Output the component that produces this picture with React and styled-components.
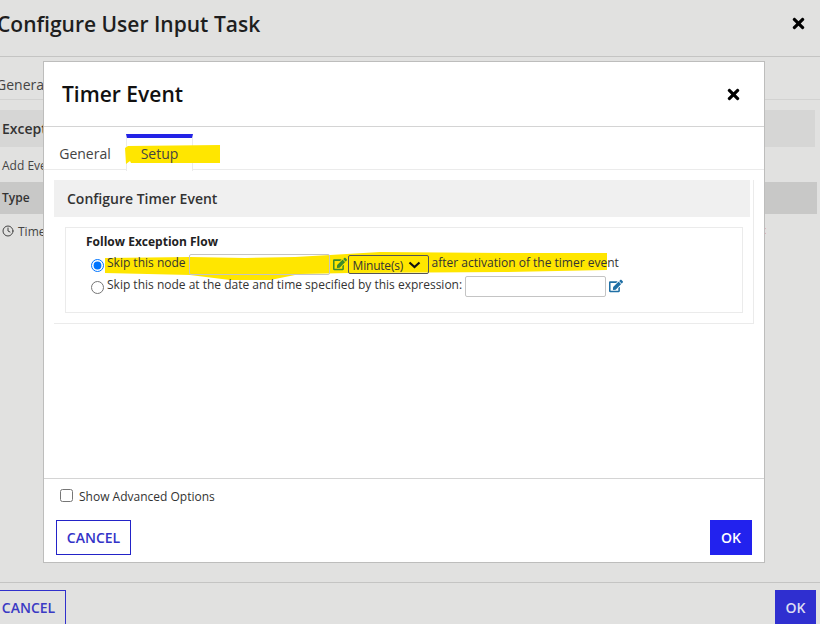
import React from 'react'
import styled, { createGlobalStyle } from 'styled-components'
import { FaEdit, FaTimes } from 'react-icons/fa'
import { FiClock } from 'react-icons/fi'

const Global = createGlobalStyle`
  html, body { margin: 0; padding: 0; }
  body { font-family: "Open Sans", "Liberation Sans", sans-serif; color: #222; }
  * { box-sizing: border-box; }
`

const App = () => {
  return (
    <Page>
      <Global />
      <BackHeader>
        <BackTitle>Configure User Input Task</BackTitle>
        <CloseBack><FaTimes /></CloseBack>
      </BackHeader>
      <BackTabs>General</BackTabs>
      <BackBand>Exception</BackBand>
      <BackLink>Add Event</BackLink>
      <BackColumns>Type</BackColumns>
      <BackRow>
        <BackCell><FiClock /> Timer</BackCell>
        <RemoveBack><FaTimes /></RemoveBack>
      </BackRow>
      <BackFooter>
        <OutlineButton $back>CANCEL</OutlineButton>
        <SolidButton $back>OK</SolidButton>
      </BackFooter>

      <Modal>
        <ModalHeader>
          <ModalTitle>Timer Event</ModalTitle>
          <CloseModal><FaTimes /></CloseModal>
        </ModalHeader>
        <Tabs>
          <Tab>General</Tab>
          <Tab $active>
            <SetupMark viewBox="0 0 95 19" preserveAspectRatio="none">
              <path d="M0 3 L3 1 L95 0 L95 18 L6 18 L5 16 L1 19 Z" />
            </SetupMark>
            <TabLabel>Setup</TabLabel>
          </Tab>
        </Tabs>
        <ModalBody>
          <Section>
            <SectionHead>Configure Timer Event</SectionHead>
            <FlowBox>
              <FlowTitle>Follow Exception Flow</FlowTitle>
              <OptionRow>
                <RowMark viewBox="0 0 503 29" preserveAspectRatio="none">
                  <path d="M0 6 L85 5 L140 6 L190 5 L225 3 L275 0 L400 1 L502 1 L502 18 L400 20 L245 21 L195 22 L165 28 L125 28 L85 23 L0 21 Z" />
                </RowMark>
                <Radio defaultChecked name="flow" />
                <OptionText>Skip this node</OptionText>
                <TextField $first />
                <EditIcon $first><FaEdit /></EditIcon>
                <UnitSelect>
                  Minute(s)
                  <svg width="13" height="8" viewBox="0 0 13 8">
                    <path d="M1.5 1.5 L6.5 6 L11.5 1.5" fill="none" stroke="#111" strokeWidth="2.2" />
                  </svg>
                </UnitSelect>
                <OptionText $after>after activation of the timer event</OptionText>
              </OptionRow>
              <OptionRow>
                <Radio name="flow" />
                <OptionText>Skip this node at the date and time specified by this expression:</OptionText>
                <TextField />
                <EditIcon><FaEdit /></EditIcon>
              </OptionRow>
            </FlowBox>
          </Section>
        </ModalBody>
        <ModalFooter>
          <AdvancedRow>
            <Check />
            <span>Show Advanced Options</span>
          </AdvancedRow>
          <ButtonRow>
            <OutlineButton>CANCEL</OutlineButton>
            <SolidButton>OK</SolidButton>
          </ButtonRow>
        </ModalFooter>
      </Modal>
    </Page>
  )
}

export default App

const Page = styled.div`
  position: relative;
  width: 820px;
  height: 624px;
  overflow: hidden;
  background: #e1e1e0;
  display: flex;
  flex-direction: column;
`
const BackHeader = styled.div`
  height: 57px;
  flex: none;
  display: flex;
  align-items: center;
  justify-content: space-between;
  padding: 0 13px 9px 0;
  border-bottom: 1px solid #c4c4c3;
`
const BackTitle = styled.h1`
  margin: 0 0 0 -3px;
  font-size: 21px;
  font-weight: 600;
  line-height: 30px;
  color: #1e1e1e;
`
const CloseBack = styled.span`
  font-size: 17px;
  color: #000;
  display: flex;
`
const BackTabs = styled.div`
  height: 43px;
  flex: none;
  padding: 18px 0 0 0;
  margin-left: -4px;
  font-size: 14px;
  color: #444;
  border-bottom: 1px solid #d2d2d1;
`
const BackBand = styled.div`
  height: 37px;
  flex: none;
  margin-top: 10px;
  width: 815px;
  background: #d6d6d5;
  padding: 9px 2px;
  font-size: 14px;
  font-weight: 600;
  color: #333;
`
const BackLink = styled.div`
  height: 35px;
  flex: none;
  padding: 10px 2px;
  font-size: 12px;
  color: #444;
`
const BackColumns = styled.div`
  height: 32px;
  flex: none;
  width: 817px;
  background: #c8c8c7;
  padding: 7px 2px;
  font-size: 12px;
  font-weight: 600;
  color: #333;
`
const BackRow = styled.div`
  height: 34px;
  flex: none;
  padding: 9px 53px 9px 2px;
  display: flex;
  align-items: center;
  justify-content: space-between;
  font-size: 12px;
  color: #444;
`
const BackCell = styled.span`
  display: flex;
  align-items: center;
  gap: 4px;
`
const RemoveBack = styled.span`
  display: flex;
  font-size: 10px;
  color: #c8506e;
`
const BackFooter = styled.div`
  margin-top: auto;
  height: 42px;
  flex: none;
  display: flex;
  justify-content: space-between;
  align-items: flex-start;
  padding: 7px 4px 0 0;
  border-top: 1px solid #c4c4c3;
`
const Modal = styled.div`
  position: absolute;
  left: 43px;
  top: 61px;
  width: 722px;
  height: 502px;
  background: #fff;
  border: 1px solid #bdbdbc;
  display: flex;
  flex-direction: column;
`
const ModalHeader = styled.div`
  height: 65px;
  flex: none;
  display: flex;
  align-items: center;
  justify-content: space-between;
  padding: 0 22px 0 18px;
  border-bottom: 1px solid #d4d4d4;
`
const ModalTitle = styled.h2`
  margin: 0;
  font-size: 21px;
  font-weight: 600;
  color: #111;
`
const CloseModal = styled.span`
  font-size: 17px;
  color: #000;
  display: flex;
`
const Tabs = styled.div`
  height: 43px;
  flex: none;
  display: flex;
  padding-left: 2px;
  border-bottom: 1px solid #ebebeb;
`
const Tab = styled.div`
  position: relative;
  width: ${p => (p.$active ? '67px' : '80px')};
  margin-top: 7px;
  height: 36px;
  display: flex;
  justify-content: center;
  align-items: center;
  padding: 2px 2px 0 0;
  font-size: 14px;
  color: #444;
  ${p => p.$active && `
    border-top: 4px solid #2323e6;
    border-left: 1px solid #ebebeb;
    border-right: 1px solid #ebebeb;
    background: #fff;
    height: 37px;
    margin-bottom: -1px;
    padding: 0 0 2px 0;
  `}
`
const TabLabel = styled.span`
  position: relative;
`
const SetupMark = styled.svg`
  position: absolute;
  left: -2px;
  top: 7px;
  width: 95px;
  height: 19px;
  path { fill: #ffe600; }
`
const ModalBody = styled.div`
  flex: 1;
  padding: 10px 10px 0 10px;
`
const Section = styled.div`
  height: 144px;
  border: 1px solid #ebebeb;
  border-width: 0 1px 1px 0;
`
const SectionHead = styled.div`
  height: 37px;
  margin-right: 3px;
  background: #f0f0f0;
  padding: 9px 13px;
  font-size: 14px;
  font-weight: 600;
  color: #333;
`
const FlowBox = styled.div`
  height: 86px;
  margin: 10px 10px 0 11px;
  border: 1px solid #ebebeb;
  padding: 6px 0 0 20px;
`
const FlowTitle = styled.div`
  font-size: 12px;
  font-weight: 700;
  color: #222;
  line-height: 16px;
  margin-bottom: 3px;
`
const OptionRow = styled.div`
  position: relative;
  height: 22px;
  display: flex;
  align-items: center;
  padding-left: 5px;
  font-size: 12px;
  color: #333;
`
const RowMark = styled.svg`
  position: absolute;
  left: 19px;
  top: -1px;
  width: 503px;
  height: 29px;
  path { fill: #ffe600; }
`
const Radio = styled.input.attrs({ type: 'radio' })`
  position: relative;
  width: 13px;
  height: 13px;
  margin: 3px 3px 0 0;
  flex: none;
`
const OptionText = styled.span`
  position: relative;
  white-space: nowrap;
  margin-bottom: 3px;
  margin-left: ${p => (p.$after ? '3px' : '0')};
  margin-right: 3px;
`
const TextField = styled.input.attrs({ type: 'text' })`
  position: relative;
  width: 141px;
  height: 21px;
  background: ${p => (p.$first ? 'transparent' : '#fff')};
  border: 1px solid #c4c4c4;
  border-radius: 2px;
  flex: none;
`
const EditIcon = styled.span`
  position: relative;
  display: flex;
  margin: 0 1px 0 3px;
  font-size: 14px;
  color: ${p => (p.$first ? '#3d8c2c' : '#1f6fa5')};
`
const UnitSelect = styled.div`
  position: relative;
  width: 81px;
  height: 19px;
  flex: none;
  display: flex;
  align-items: center;
  justify-content: space-between;
  padding: 2px 7px 0 4px;
  border: 1px solid #555;
  border-radius: 2px;
  font-size: 12px;
  letter-spacing: -0.2px;
  color: #333;
`
const ModalFooter = styled.div`
  height: 84px;
  flex: none;
  border-top: 1px solid #d4d4d4;
  padding: 9px 12px 7px 12px;
  display: flex;
  flex-direction: column;
  justify-content: space-between;
`
const AdvancedRow = styled.label`
  display: flex;
  align-items: center;
  gap: 6px;
  padding-left: 4px;
  font-size: 12px;
  color: #333;
`
const Check = styled.input.attrs({ type: 'checkbox' })`
  width: 13px;
  height: 13px;
  margin: -3px 0 0 0;
`
const ButtonRow = styled.div`
  display: flex;
  justify-content: space-between;
`
const OutlineButton = styled.button`
  width: ${p => (p.$back ? '66px' : '75px')};
  height: ${p => (p.$back ? '40px' : '35px')};
  padding: ${p => (p.$back ? '0 8px 6px 0' : '0')};
  background: transparent;
  border: 1px solid ${p => (p.$back ? '#3030cc' : '#2323c8')};
  ${p => p.$back && 'border-left: none; border-bottom: none;'}
  font-family: inherit;
  font-size: 14px;
  font-weight: 600;
  color: ${p => (p.$back ? '#3a3ac4' : '#3333c8')};
`
const SolidButton = styled.button`
  width: ${p => (p.$back ? '41px' : '42px')};
  height: ${p => (p.$back ? '40px' : '35px')};
  padding: ${p => (p.$back ? '0 0 6px 0' : '0')};
  border: none;
  background: ${p => (p.$back ? '#2f2fd0' : '#2222ee')};
  font-family: inherit;
  font-size: 14px;
  font-weight: 600;
  color: ${p => (p.$back ? '#dcdcf2' : '#fff')};
`
